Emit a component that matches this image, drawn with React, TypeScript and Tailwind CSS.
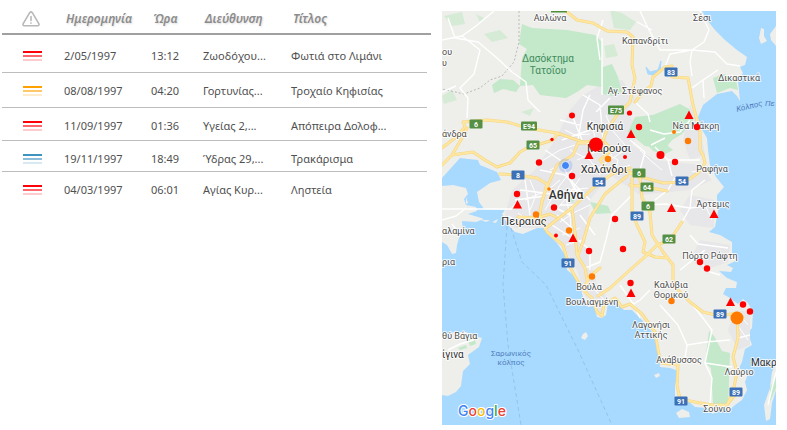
type Level = 'high' | 'medium' | 'low';

type Incident = {
  level: Level;
  label: string;
  date: string;
  time: string;
  address: string;
  title: string;
  height: string;
};

const incidents: Incident[] = [
  { level: 'high', label: 'Υψηλή', date: '2/05/1997', time: '13:12', address: 'Ζωοδόχου...', title: 'Φωτιά στο Λιμάνι', height: 'h-[38px] pt-[13px]' },
  { level: 'medium', label: 'Μεσαία', date: '08/08/1997', time: '04:20', address: 'Γορτυνίας...', title: 'Τροχαίο Κηφισίας', height: 'h-[35px] pt-[10px]' },
  { level: 'high', label: 'Υψηλή', date: '11/09/1997', time: '01:36', address: 'Υγείας 2,...', title: 'Απόπειρα Δολοφ...', height: 'h-[33px] pt-[10px]' },
  { level: 'low', label: 'Χαμηλή', date: '19/11/1997', time: '18:49', address: 'Ύδρας 29,...', title: 'Τρακάρισμα', height: 'h-[31px] pt-[10px]' },
  { level: 'high', label: 'Υψηλή', date: '04/03/1997', time: '06:01', address: 'Αγίας Κυρ...', title: 'Ληστεία', height: 'h-[31px] pt-[10px]' },
];

const levelColor: Record<Level, string> = {
  high: 'bg-[#ff0008]',
  medium: 'bg-[#ffa200]',
  low: 'bg-[#3f93bf]',
};

function LevelIcon({ level, label }: { level: Level; label: string }) {
  const color = levelColor[level];
  return (
    <span role="img" aria-label={label} className="flex w-[19px] flex-col gap-[2px] pt-[3px]">
      <span className={`h-[2px] ${color}`} />
      <span className={`h-[2px] opacity-60 ${color}`} />
      <span className={`h-[2px] opacity-20 ${color}`} />
    </span>
  );
}

function WarningIcon() {
  return (
    <svg width="18" height="16" viewBox="0 0 18 16" fill="none" stroke="#b8b8b8" strokeWidth="1.6" strokeLinejoin="round" strokeLinecap="round" role="img" aria-label="Επίπεδο">
      <path d="M7.7 1.7 1.2 12.6q-.8 2 1.2 2.2h13.2q2-.2 1.2-2.2L10.3 1.7q-1.3-1.6-2.6 0z" />
      <path d="M9 5.6v4M9 12v.2" />
    </svg>
  );
}

function IncidentTable() {
  const head = 'border-b-2 border-[#a0a0a0] p-0 pl-[2px] pb-[6px] text-left align-bottom font-semibold italic';
  return (
    <table className="w-full table-fixed border-separate border-spacing-0 text-[11px] leading-4 whitespace-nowrap text-[#505050]">
      <colgroup>
        <col className="w-[62px]" />
        <col className="w-[87px]" />
        <col className="w-[52px]" />
        <col className="w-[88px]" />
        <col />
        <col className="w-[4px]" />
      </colgroup>
      <thead>
        <tr className="h-[35px] text-[12px] text-[#8c8c8c] [text-shadow:1px_1px_2px_#dddddd]">
          <th scope="col" className="border-b-2 border-[#a0a0a0] p-0 pb-[6px] pl-[20px] align-bottom">
            <WarningIcon />
          </th>
          <th scope="col" className={head}>Ημερομηνία</th>
          <th scope="col" className={head}>Ώρα</th>
          <th scope="col" className={head}>Διεύθυνση</th>
          <th scope="col" className={head}>Τίτλος</th>
          <td className="border-b-2 border-[#a0a0a0] p-0" />
        </tr>
      </thead>
      <tbody>
        {incidents.map((row, i) => {
          const cell = `p-0 align-top ${row.height} ${i < incidents.length - 1 ? 'border-b border-[#bdbdbd]' : ''}`;
          return (
            <tr key={row.date}>
              <td className={`${cell} pl-[21px]`}>
                <LevelIcon level={row.level} label={row.label} />
              </td>
              <td className={cell}>{row.date}</td>
              <td className={cell}>{row.time}</td>
              <td className={cell}>{row.address}</td>
              <td className={cell}>{row.title}</td>
              <td className="p-0" />
            </tr>
          );
        })}
      </tbody>
    </table>
  );
}

type Label = [text: string, x: number, y: number, size: number, anchor?: 'start'];

const places: Label[] = [
  ['Αυλώνα', 550, 21, 9],
  ['Σέσι', 702, 21, 9],
  ['Καπανδρίτι', 645, 44, 9],
  ['Δικαστικά', 739, 81, 9],
  ['Αγ. Στέφανος', 635, 94, 9],
  ['Νέα Μάκρη', 696, 129, 9],
  ['Ραφήνα', 712, 172, 9],
  ['Άρτεμις', 713, 207, 9],
  ['Πόρτο Ράφτη', 710, 259, 9],
  ['Καλύβια', 671, 288, 9],
  ['Θορικού', 671, 298, 9],
  ['Βούλα', 589, 290, 9],
  ['Βουλιαγμένη', 592, 305, 9],
  ['Λαγονήσι', 651, 328, 9],
  ['Αττικής', 651, 338, 9],
  ['Ανάβυσσος', 679, 363, 9],
  ['Λαύριο', 739, 375, 9],
  ['Σούνιο', 717, 412, 9],
  ['ου', 442, 55, 9, 'start'],
  ['υ', 442, 66, 9, 'start'],
  ['άνδρα', 442, 137, 9, 'start'],
  ['αλαμίνα', 442, 234, 9, 'start'],
  ['ρια', 442, 265, 9, 'start'],
  ['θύ Βάγια', 442, 339, 9, 'start'],
];

const towns: Label[] = [
  ['Κηφισιά', 605, 130, 10],
  ['Μαρούσι', 609, 152, 11],
  ['Χαλάνδρι', 604, 173, 11],
  ['Πειραιάς', 524, 225, 11],
  ['ίγινα', 442, 358, 10, 'start'],
  ['Μακρ', 751, 366, 10, 'start'],
];

type Shield = [text: string, x: number, y: number];

const blueShields: Shield[] = [
  ['83', 671, 72], ['8', 518, 175], ['54', 599, 182], ['54', 682, 181], ['89', 637, 216],
  ['91', 568, 263], ['89', 720, 314], ['89', 736, 392], ['91', 681, 401],
];

const greenShields: Shield[] = [
  ['6', 476, 124], ['E94', 529, 126], ['65', 533, 145], ['E75', 616, 110], ['6', 639, 173],
  ['64', 647, 187], ['6', 648, 206], ['62', 669, 239],
];

type Dot = [x: number, y: number, r: number];

const redDots: Dot[] = [
  [572, 115.5, 3], [552, 139.5, 1.7], [596, 144.5, 7], [629.5, 113, 2.6], [639, 127, 3.2], [697, 127, 3.2],
  [539, 162.5, 3.2], [572, 176, 3.2], [625, 157, 2], [660.5, 155, 4], [675, 162, 3.2], [517, 194, 3.2],
  [554, 207.5, 3.2], [615, 219, 3.2], [556, 235.5, 2], [589, 251, 3.2], [623, 249, 3.2], [700, 262, 3.2],
  [707, 268.5, 3.2], [630.5, 283, 3.2], [743, 304.5, 3.2], [750, 311.5, 3.2],
];

const orangeDots: Dot[] = [
  [674, 132, 2], [688, 141, 3.2], [608, 159, 3.2], [549, 189, 1.8], [536, 214.5, 3.2], [569, 230.5, 3.2],
  [592, 276.5, 3.2], [671.5, 301, 3.2], [737, 318, 6.5],
];

const triangles: [number, number][] = [
  [689, 115], [631, 134], [589, 155], [517.5, 204.5], [573, 238], [671.5, 208], [714, 214], [631, 293], [730.5, 302],
];

const land =
  'M442 11H702L707 20 715 30 725 40 737 50 747 57 745 65 740 67 743 73 738 82 739 90 740 101 737 96 732 91 717 94 703 105 698 117 701 128 707 138 708 150 710 165 716 177 724 187 717 195 717 203 718 212 715 227 709 232 720 235 732 242 732 253 738 260 727 265 733 268 731 272 719 271 727 278 737 282 736 288 726 288 723 294 730 298 738 304 743 299 748 303 753 312 752 328 748 333 750 339 752 345 745 349 742 362 739 368 748 374 745 382 747 390 742 400 735 405 728 411 720 408 713 414 707 408 695 407 688 401 675 398 675 385 677 377 676 370 670 368 660 367 659 355 656 343 652 332 642 320 632 310 624 310 615 302 608 303 606 315 602 318 597 317 594 306 588 307 583 297 578 279 567 270 565 255 557 243 547 233 543 226 537 228 523 234 515 232 508 225 502 214 505 210 484 209 479 202 477 192 490 183 501 180 497 172 480 165 478 160 468 159 460 158 451 168 442 178Z';

const islands = [
  'M442 186 453 185 466 188 468 194 464 199 466 205 476 207 477 211 468 214 478 217 484 219 476 222 462 221 463 230 459 238 457 245 456 253 452 254 447 245 442 242Z',
  'M492 222 498 219 496 223ZM481 220 490 220 486 222ZM466 197 468 203 466 204Z',
  'M442 336 454 332 466 332 475 336 482 338 479 347 468 355 470 364 463 371 461 386 456 392 448 396 442 395Z',
  'M776 364 772 372 770 388 764 405 766 421 770 419 772 403 776 390Z',
  'M761 28 764 29 764 36 767 41 761 44 759 38ZM770 34 776 26V46L771 40Z',
  'M583 334 586 332 588 336 585 340 581 338ZM654 375 659 373 660 376 656 378ZM676 413 682 409 689 412 690 417 679 418Z',
];

const urban = [
  'M583 95 600 85 622 80 635 98 626 112 640 130 632 145 655 160 700 165 712 180 690 190 640 195 610 175 590 200 585 245 597 285 608 298 600 315 585 296 577 270 560 240 545 228 515 228 505 215 512 190 535 170 555 140 570 110Z',
  'M690 105 700 130 705 155 690 160 683 140ZM690 195 714 200 714 228 690 225 680 210ZM700 240 730 245 728 262 705 270 690 260ZM735 310 750 312 750 345 738 350 728 330Z',
];

const parks = [
  'M522 24 532 28 567 30 595 35 602 42 602 87 587 85 577 92 566 98 540 95 533 85 520 86 522 58 527 49 519 44Z',
  'M492 85 500 79 513 80 520 86 516 92 503 89 494 93ZM603 67 612 64 618 77 622 92 612 96 603 94Z',
  'M635 117 653 115 680 104 689 109 693 120 682 134 672 140 665 149 645 146 628 132Z',
  'M646 143 660 140 673 150 665 154 653 151Z',
  'M709 331 714 336 722 351 730 353 728 407 713 405 711 368 705 363Z',
  'M713 78 724 74 736 80 738 90 730 88 717 93Z',
  'M590 202 608 206 611 213 596 214ZM468 340 474 337 476 344 470 346ZM458 348 466 345 467 348 460 350ZM770 388 776 377V388L770 402ZM568 198 575 196 573 203Z',
];

const faintParks =
  'M444 16 462 12 465 24 452 26ZM476 14 484 18 480 22ZM610 10 622 13 636 22 630 30 614 28ZM484 34 500 30 508 38 492 42ZM442 96 452 90 457 100 444 104ZM604 46 614 44 618 56 606 58ZM521 112 534 108 530 116Z';

const minorRoads =
  'M442 40 462 36 476 26 494 11M448 18 455 38 478 42 497 58 512 72 526 82 528 100 540 112M462 36 480 50 474 74 460 88 468 98 467 118M442 92 456 86M602 38V95M603 20 597 38 600 60M640 11 648 28 660 50 692 50 704 42 709 30 700 11M637 22 652 30M692 50 690 62 692 76M692 50 715 52 727 64 740 66M665 67 670 54 692 50M692 88 703 80 718 70M703 80 704 98M590 95 583 110 578 140M583 95 600 105 603 140M610 98 596 112M635 102 648 114 650 122M650 130 664 134 680 132 690 120M651 145 665 138M655 147 668 160 700 160M645 152 640 170M630 140 645 152M545 150 560 160 575 190M540 170 565 175 590 200M520 190 560 195 580 190M525 180 530 215M515 200 545 196M512 209 442 209M560 205 575 205M572 115 582 140M560 120 580 125M562 140 590 130M645 205 665 204 690 208 714 205M682 222 690 208 692 190 705 180M655 200 668 190 675 178M690 235 698 244 728 248M668 160 672 176M705 250 690 262 680 270M700 262 710 272 720 275M620 285 634 305 640 318M660 305 678 325 687 345 706 342 730 340M687 345 685 358M690 302 703 318 712 330 705 363 712 378 710 405M738 338 750 335M705 363 732 367M632 195 612 215 606 240 600 262 585 268M580 215 595 235M557 215 572 228M552 225 575 240M550 205 570 215M578 240 590 250 590 270M650 290 640 300 632 305M442 220 456 216 466 208M452 224 460 235M448 350 460 344 474 340M776 372 768 405';

const cityStreets =
  'M525 200 548 190 560 180M530 210 536 195 530 180M545 210 560 185 572 170M556 198 570 190 588 188M556 210 568 196 580 178M560 222 575 212 590 205M562 235 580 228M566 245 582 240M570 150 590 160 600 175M577 160 600 150 618 160M590 120 596 140 612 155M606 115 612 130 625 145M596 185 612 172 630 165M550 170 570 160M565 130 575 135 590 134M615 175 618 160M518 213 530 222M508 216 520 222M510 210 520 198M596 170 610 160 625 150M572 180 580 200M564 190 570 215 572 240M640 150 650 160 662 170M535 165 560 150 575 145M740 315 748 325M738 326 748 340M692 172 708 168M705 205 712 220M595 290 604 300';

const highways =
  'M566 11 577 20 593 23 607 31 627 32 633 37 632 65 635 78 630 102 617 115 607 130 603 140M672 66 665 67 653 77 651 86 643 92 635 102M672 77 688 78 693 105 700 132 700 150 703 155 705 163 698 173 685 182 663 183 645 178 630 172M442 148 455 138 465 127 463 122 487 120 507 122 527 128 557 133 583 142 603 140 612 150M467 128 462 138 452 155 442 165M452 155 473 152 485 160 497 167 510 163 520 152 527 148 553 140 558 133M500 174 517 175 537 178 547 184 540 210M603 140 590 143 578 143 573 155 557 165 548 185 542 200 540 215 547 232 563 245 568 262 573 273 583 290 592 298 597 312 602 316 604 304 615 298 622 307 630 304 642 314 655 332 658 350 661 363 678 365 677 385 680 399 695 402 712 405 727 405 735 395M518 217 537 218 550 214 556 217M545 229 573 207 593 188 612 174 630 168M572 208 575 232 577 255 585 268 588 285M612 150 600 160 607 170 627 172 640 178 642 198 650 212 652 235 663 252 673 265 673 285 690 302 703 312 720 316 737 313 738 338 733 357 737 372 733 392 727 405M632 178 632 212 637 225 645 242 643 252 655 257 668 258M682 222 670 240 657 245 647 255 630 270 610 288 598 296M630 185 647 187 667 191M627 176 605 194 590 218 583 242 578 255M600 268 590 276 584 288';

function Shields({ items, color }: { items: Shield[]; color: string }) {
  return (
    <g fontSize="7" fontWeight="700" textAnchor="middle">
      {items.map(([text, x, y]) => {
        const w = text.length > 2 ? 16 : 13;
        return (
          <g key={`${x}-${y}`}>
            <rect x={x - w / 2} y={y - 4.5} width={w} height="9" rx="1" fill={color} />
            <text x={x} y={y + 2.5} fill="#ffffff">{text}</text>
          </g>
        );
      })}
    </g>
  );
}

function Labels({ items, color }: { items: Label[]; color: string }) {
  return (
    <g fill={color} stroke="#ffffff" strokeOpacity="0.8" strokeWidth="2" strokeLinejoin="round" paintOrder="stroke">
      {items.map(([text, x, y, size, anchor]) => (
        <text key={`${x}-${y}`} x={x} y={y} fontSize={size} textAnchor={anchor ?? 'middle'}>{text}</text>
      ))}
    </g>
  );
}

function AtticaMap() {
  return (
    <svg viewBox="442 11 334 414" className="block h-auto w-full bg-[#a8d9ff] font-[Roboto,'Noto_Sans',sans-serif]" role="img" aria-label="Χάρτης Αττικής">
      <rect x="442" y="11" width="334" height="414" fill="#a8d9ff" />
      <path d={land} fill="#eeeeea" />
      {islands.map((d) => <path key={d} d={d} fill="#eeeeea" />)}
      {urban.map((d) => <path key={d} d={d} fill="#e7e7e9" />)}
      <path d={faintParks} fill="#d5ebd5" />
      {parks.map((d) => <path key={d} d={d} fill="#c3e8ca" />)}
      <path d="M646 67 650 72 658 70 661 61 660 71 654 75 648 74Z" fill="#a8d9ff" stroke="#a8d9ff" />
      <path d="M519 11V42L514 62 502 76 490 80 480 88 464 94 442 89" fill="none" stroke="#b9b9b9" strokeWidth="1" strokeDasharray="2 2" />
      <path d="M507 226 503 285 508 345 521 425M511 228 522 262 546 285 578 350 612 425" fill="none" stroke="#8fbce4" strokeWidth="0.8" strokeDasharray="4 3" />
      <path d={cityStreets} fill="none" stroke="#ffffff" strokeWidth="1" />
      <path d={minorRoads} fill="none" stroke="#ffffff" strokeWidth="1.4" strokeLinejoin="round" />
      <path d={highways} fill="none" stroke="#f5d583" strokeWidth="3" strokeLinejoin="round" strokeLinecap="round" />
      <path d={highways} fill="none" stroke="#ffe7a0" strokeWidth="1.8" strokeLinejoin="round" strokeLinecap="round" />
      <rect x="551" y="11" width="16" height="1.5" fill="#4f8f3a" />

      <Shields items={blueShields} color="#3b6fb6" />
      <Shields items={greenShields} color="#558f43" />
      <Labels items={places} color="#505050" />
      <Labels items={towns} color="#303030" />
      <text x="566" y="199" fontSize="12" fontWeight="500" textAnchor="middle" fill="#333333" stroke="#ffffff" strokeOpacity="0.8" strokeWidth="2" paintOrder="stroke">Αθήνα</text>
      <g fill="#3f8b5c" fontSize="10" textAnchor="middle">
        <text x="548" y="62">Δασόκτημα</text>
        <text x="548" y="74">Τατοΐου</text>
      </g>
      <g fill="#4f80bd" fontSize="8">
        <text x="511" y="356" textAnchor="middle">Σαρωνικός</text>
        <text x="511" y="365" textAnchor="middle">κόλπος</text>
        <text fontStyle="italic" transform="translate(737 112) rotate(-14)">Κόλπος</text>
        <text x="765" y="106" fontStyle="italic">Πε</text>
      </g>

      <g fill="#ff0000">
        {redDots.map(([x, y, r]) => <circle key={`${x}-${y}`} cx={x} cy={y} r={r} />)}
        {triangles.map(([x, y]) => <path key={`${x}-${y}`} d={`M${x} ${y - 4.5}l4.5 8.5h-9z`} />)}
      </g>
      <g fill="#ff7a00">
        {orangeDots.map(([x, y, r]) => <circle key={`${x}-${y}`} cx={x} cy={y} r={r} />)}
      </g>
      <circle cx="565.5" cy="165.5" r="7" fill="#4a84f0" opacity="0.2" />
      <circle cx="565.5" cy="165.5" r="4" fill="#4285f4" stroke="#ffffff" strokeWidth="0.8" />

      <text x="458" y="416" fontSize="14" fontWeight="500" fontFamily="Inter, sans-serif" stroke="#ffffff" strokeWidth="2" strokeLinejoin="round" paintOrder="stroke">
        <tspan fill="#4285f4">G</tspan>
        <tspan fill="#ea4335">o</tspan>
        <tspan fill="#fbbc05">o</tspan>
        <tspan fill="#4285f4">g</tspan>
        <tspan fill="#34a853">l</tspan>
        <tspan fill="#ea4335">e</tspan>
      </text>
    </svg>
  );
}

export default function App() {
  return (
    <main className="flex min-h-screen items-start gap-[11px] bg-white pr-[11px] pl-[2px] font-['Noto_Sans','Open_Sans',sans-serif]">
      <section className="min-w-0 flex-1" aria-label="Περιστατικά">
        <IncidentTable />
      </section>
      <section className="w-[334px] shrink-0 pt-[11px]" aria-label="Χάρτης">
        <AtticaMap />
      </section>
    </main>
  );
}
